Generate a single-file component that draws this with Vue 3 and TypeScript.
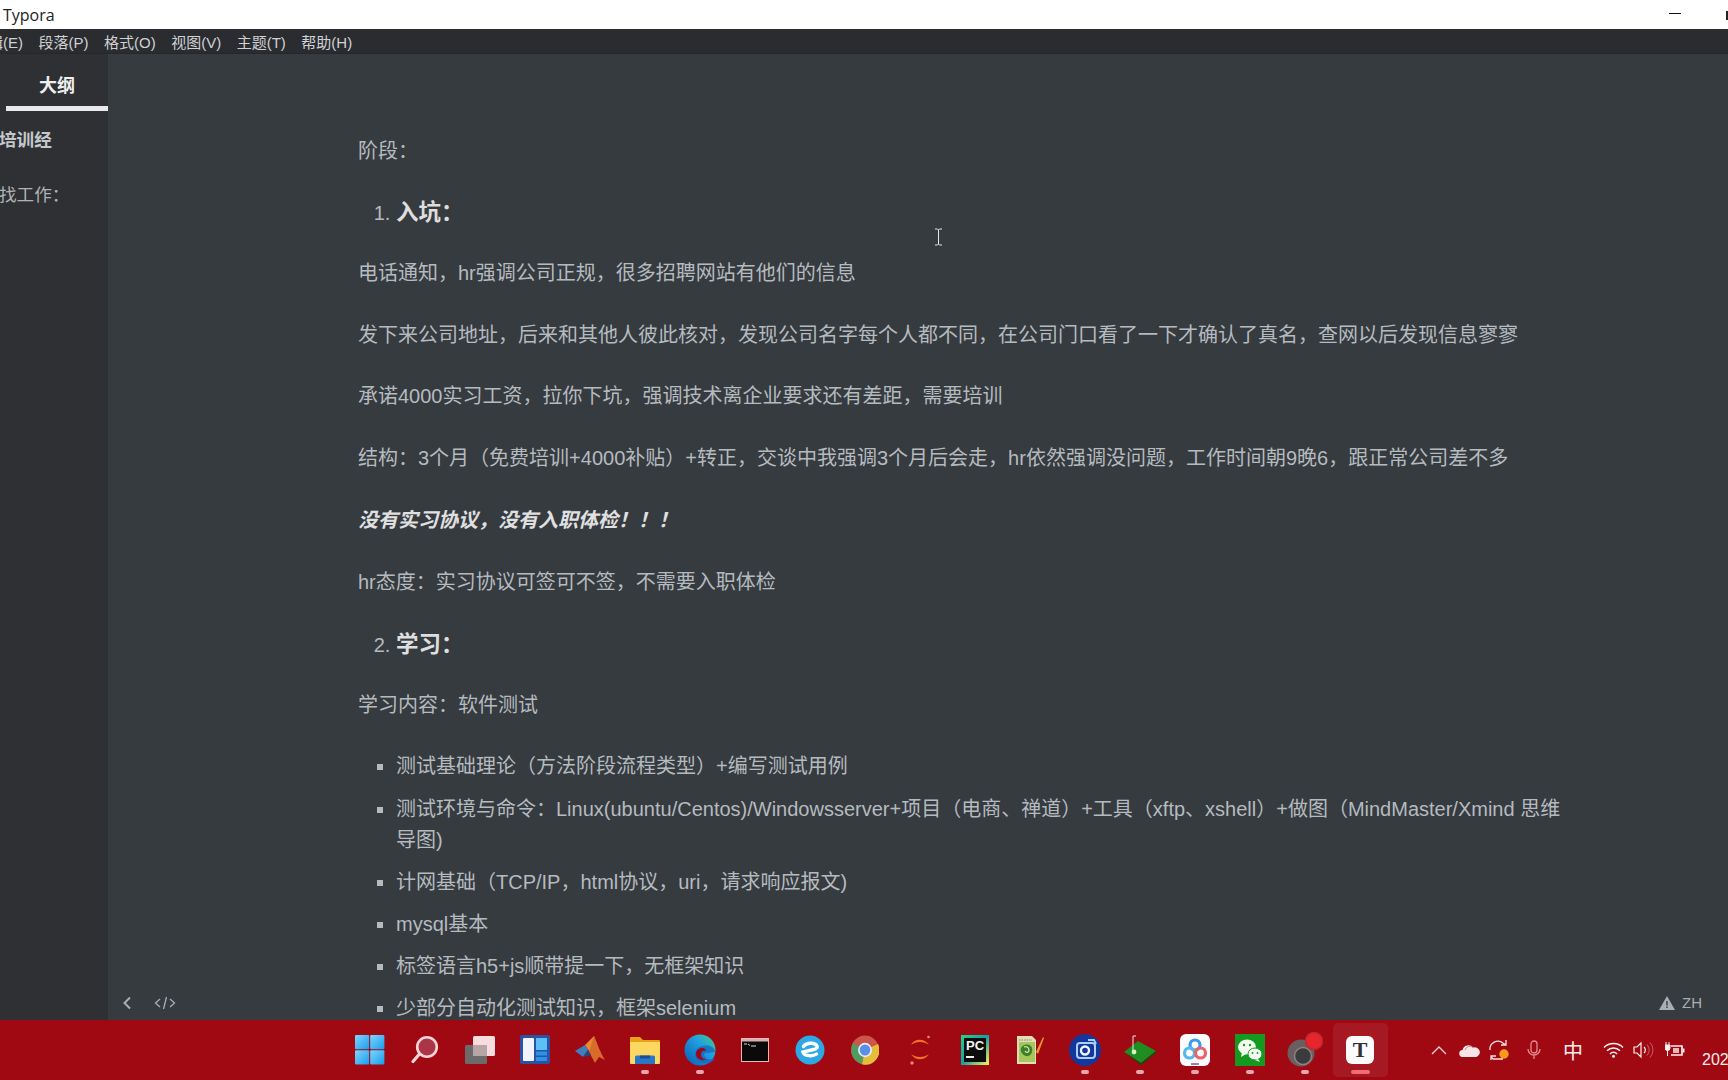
<script setup lang="ts">
const menus = ['编辑(E)', '段落(P)', '格式(O)', '视图(V)', '主题(T)', '帮助(H)']

const topics = [
  '测试基础理论（方法阶段流程类型）+编写测试用例',
  '测试环境与命令：Linux(ubuntu/Centos)/Windowsserver+项目（电商、禅道）+工具（xftp、xshell）+做图（MindMaster/Xmind 思维导图)',
  '计网基础（TCP/IP，html协议，uri，请求响应报文)',
  'mysql基本',
  '标签语言h5+js顺带提一下，无框架知识',
  '少部分自动化测试知识，框架selenium',
]
</script>

<template>
  <div class="screen">
    <header class="titlebar">
      <span class="app-name">Typora</span>
      <i class="minimize"></i>
      <i class="close-stub"></i>
    </header>

    <nav class="menubar">
      <span v-for="m in menus" :key="m">{{ m }}</span>
    </nav>

    <main class="window">
      <aside class="sidebar">
        <div class="tab"><b>大纲</b></div>
        <div class="outline-h1">培训经</div>
        <div class="outline-h2">找工作：</div>
      </aside>

      <section class="editor">
        <article class="doc">
          <p class="lead">阶段：</p>
          <ol>
            <li><h3>入坑：</h3></li>
          </ol>
          <p>电话通知，hr强调公司正规，很多招聘网站有他们的信息</p>
          <p>发下来公司地址，后来和其他人彼此核对，发现公司名字每个人都不同，在公司门口看了一下才确认了真名，查网以后发现信息寥寥</p>
          <p>承诺4000实习工资，拉你下坑，强调技术离企业要求还有差距，需要培训</p>
          <p>结构：3个月（免费培训+4000补贴）+转正，交谈中我强调3个月后会走，hr依然强调没问题，工作时间朝9晚6，跟正常公司差不多</p>
          <p class="strong">没有实习协议，没有入职体检！！！</p>
          <p>hr态度：实习协议可签可不签，不需要入职体检</p>
          <ol start="2">
            <li><h3>学习：</h3></li>
          </ol>
          <p>学习内容：软件测试</p>
          <ul>
            <li v-for="t in topics" :key="t">{{ t }}</li>
          </ul>
        </article>

        <div class="foot-left">
          <svg width="12" height="16" viewBox="0 0 12 16"><path d="M9 2.500 3.500 8 9 13.500" fill="none" stroke="#a9aeb3" stroke-width="2" /></svg>
          <svg width="22" height="16" viewBox="0 0 22 16"><path d="M6 4 1.500 8 6 12M16 4l4.500 4L16 12M12.500 2 9.500 14" fill="none" stroke="#a9aeb3" stroke-width="1.300" /></svg>
        </div>
        <div class="foot-right">
          <svg width="16" height="14" viewBox="0 0 16 14"><path d="M8 0 16 14H0Z" fill="#a9aeb3" /><path d="M7.300 5h1.400v4.500H7.300zM7.300 10.500h1.400V12H7.300z" fill="#363b40" /></svg>
          <span class="lang">ZH</span>
          <span class="count">:</span>
        </div>

        <svg class="ibeam" width="9" height="18" viewBox="0 0 9 18"><path d="M1 1h2.500L4.500 2l1-1H8M4.500 2v14M1 17h2.500l1-1 1 1H8" fill="none" stroke="#e8e8e8" stroke-width="1" /></svg>
      </section>
    </main>

    <footer class="taskbar">
      <div class="apps">
        <!-- start -->
        <div class="app">
          <svg width="30" height="30" viewBox="0 0 30 30">
            <defs>
              <linearGradient id="win" x1="0" y1="0" x2="1" y2="1"><stop offset="0" stop-color="#7fd6fa" /><stop offset="1" stop-color="#1a9cf0" /></linearGradient>
            </defs>
            <rect width="14.200" height="14.200" rx="1" fill="url(#win)" /><rect x="15.200" width="14.200" height="14.200" rx="1" fill="url(#win)" />
            <rect y="15.200" width="14.200" height="14.200" rx="1" fill="url(#win)" /><rect x="15.200" y="15.200" width="14.200" height="14.200" rx="1" fill="url(#win)" />
          </svg>
        </div>
        <!-- search -->
        <div class="app">
          <svg width="30" height="30" viewBox="0 0 30 30">
            <circle cx="17" cy="12" r="9.800" fill="#ab3445" stroke="#fbd5d8" stroke-width="2.600" />
            <path d="M9.500 19 3 26.500" stroke="#fbd5d8" stroke-width="3.200" stroke-linecap="round" />
          </svg>
        </div>
        <!-- task view -->
        <div class="app">
          <svg width="32" height="30" viewBox="0 0 32 30">
            <rect x="9" y="1" width="22" height="20" rx="1.500" fill="#f6dcdc" />
            <rect x="1" y="10" width="22" height="19" rx="1.500" fill="#6d6a6a" />
            <rect x="9" y="10" width="14" height="11" fill="#b7a5a6" />
          </svg>
        </div>
        <!-- widgets -->
        <div class="app">
          <svg width="30" height="30" viewBox="0 0 30 30">
            <rect width="30" height="29" rx="2" fill="#2c52a4" />
            <rect x="3" y="3" width="11" height="23" rx="1" fill="#f1f4fb" />
            <rect x="16" y="3" width="11" height="12" fill="#5cc0f6" />
            <rect x="16" y="16.500" width="11" height="4" fill="#2a93e8" />
            <rect x="16" y="22" width="11" height="4" fill="#2a93e8" />
          </svg>
        </div>
        <!-- matlab -->
        <div class="app">
          <svg width="32" height="30" viewBox="0 0 32 30">
            <path d="M1 16 11 10 14 15 9 22Z" fill="#3f7fc0" />
            <path d="M11 10 20 1 24 12 17 19Z" fill="#e58a35" />
            <path d="M20 1C23 8 27 19 31 25L25 22 21 28 15 17Z" fill="#d86a2a" />
            <path d="M9 22 14 15 17 20Z" fill="#1d4e83" />
          </svg>
        </div>
        <!-- explorer -->
        <div class="app">
          <svg width="32" height="28" viewBox="0 0 32 28">
            <path d="M1 2a1 1 0 0 1 1-1h9l3 3h16a1 1 0 0 1 1 1v4H1Z" fill="#e8a317" />
            <path d="M1 6h30v21a1 1 0 0 1-1 1H2a1 1 0 0 1-1-1Z" fill="#fcd860" />
            <path d="M6 28v-7a1.500 1.500 0 0 1 1.500-1.500h17A1.500 1.500 0 0 1 26 21v7Z" fill="#2a77c8" />
            <rect x="11" y="19.500" width="10" height="3" fill="#1a4f94" />
          </svg>
          <i class="dot"></i>
        </div>
        <!-- edge -->
        <div class="app">
          <svg width="32" height="32" viewBox="0 0 32 32">
            <defs>
              <linearGradient id="edge" x1="0" y1="1" x2="1" y2="0"><stop offset="0" stop-color="#0c58b0" /><stop offset=".6" stop-color="#1f9fe0" /><stop offset="1" stop-color="#45d07c" /></linearGradient>
            </defs>
            <circle cx="16" cy="16" r="15.500" fill="url(#edge)" />
            <path d="M31 18c0-4-4-6.500-9-6.500-7 0-11 4-11 9 0 5 5 9 11 9 4 0 7-2 9-5-4 1.500-9 1-10.500-2C19 20 21 18 24 19Z" fill="#1268c4" opacity=".75" />
            <path d="M12 20c0-4 3.500-6.500 7-6 2 .3 3 1.500 3 3-3-1-5 .5-5 3.500 0 3 2.500 5 6 5-6 2-11-1-11-5.500Z" fill="#a00812" />
          </svg>
          <i class="dot"></i>
        </div>
        <!-- terminal -->
        <div class="app">
          <svg width="28" height="24" viewBox="0 0 28 24">
            <rect x=".5" y=".5" width="27" height="23" fill="#0a0a0a" stroke="#e9b7b7" />
            <rect x="1" y="1" width="26" height="2.500" fill="#d9b0b0" />
            <path d="M3 6h3M7 6l2 1.500M10 8h5" stroke="#dcdcdc" stroke-width="1" fill="none" />
          </svg>
        </div>
        <!-- 2345 browser -->
        <div class="app">
          <svg width="30" height="30" viewBox="0 0 30 30">
            <circle cx="15" cy="15" r="14.500" fill="#2ea8e4" />
            <path d="M8.500 11.500C11 7.500 20 7 22 11c.8 2-1 3-3.500 3.500L8 17c1 4 9.500 5 13.500 2" fill="none" stroke="#fff" stroke-width="3.400" stroke-linecap="round" />
          </svg>
        </div>
        <!-- chrome -->
        <div class="app">
          <svg width="28" height="30" viewBox="0 0 28 30">
            <ellipse cx="14" cy="15" rx="14" ry="14.500" fill="#c9574c" />
            <path d="M14 15 2 8A14 14.500 0 0 0 11 29Z" fill="#4f9b62" />
            <path d="M14 15 27 9A14 14.500 0 0 1 11 29.300Z" fill="#e4bd3a" />
            <ellipse cx="14" cy="15" rx="7" ry="7.200" fill="#e9eef7" />
            <ellipse cx="14" cy="15" rx="5.300" ry="5.500" fill="#5a90e8" />
          </svg>
        </div>
        <!-- orange arcs -->
        <div class="app">
          <svg width="28" height="32" viewBox="0 0 28 32">
            <path d="M5 11C8 4 19 4 23 11 18 7 10 7 5 11Z" fill="#f3702a" />
            <path d="M5 20C10 24 18 24 23 20 19 27 9 27 5 20Z" fill="#f3702a" />
            <circle cx="22.500" cy="3" r="1.300" fill="#ee8b6a" />
            <circle cx="6" cy="29" r="1.700" fill="#ee8b6a" />
          </svg>
        </div>
        <!-- pycharm -->
        <div class="app">
          <svg width="28" height="30" viewBox="0 0 28 30">
            <defs>
              <linearGradient id="pc" x1="0" y1="0" x2="1" y2="1"><stop offset="0" stop-color="#21d789" /><stop offset=".5" stop-color="#0f9ea8" /><stop offset="1" stop-color="#fcf84a" /></linearGradient>
            </defs>
            <rect width="28" height="30" fill="url(#pc)" />
            <rect x="3" y="3" width="22" height="24" fill="#0c0c0c" />
            <text x="5" y="15" class="pc-text">PC</text>
            <rect x="5" y="21" width="8" height="2" fill="#eee" />
          </svg>
        </div>
        <!-- notepad -->
        <div class="app">
          <svg width="28" height="30" viewBox="0 0 28 30">
            <path d="M1 1h15l4 4v24H1Z" fill="#e2dcb8" />
            <path d="M3 7h16v20H3Z" fill="#a6c65c" />
            <path d="M5 13c3-5 10-4 11 0 1 5-2 9-6 8s-6-5-5-8Z" fill="#3e7f2e" />
            <path d="M8 12c2-1 5 0 5 3s-3 3-4 1" fill="none" stroke="#dbe9a8" stroke-width="1.200" />
            <path d="M3 5h13" stroke="#a7a27c" stroke-width="1.500" stroke-dasharray="1.500 1" />
            <path d="M20 17 27 2l1 1-6 16Z" fill="#e8953a" />
          </svg>
        </div>
        <!-- screen capture -->
        <div class="app">
          <svg width="32" height="32" viewBox="0 0 32 32">
            <circle cx="16" cy="16" r="16" fill="#14379c" />
            <path d="M8 12a3 3 0 0 1 3-3h12a3 3 0 0 1 3 3v9a3 3 0 0 1-3 3H11a3 3 0 0 1-3-3Z" fill="none" stroke="#a8d2fa" stroke-width="2" />
            <circle cx="16" cy="16.500" r="4" fill="none" stroke="#eef6ff" stroke-width="2.400" />
            <path d="M19 6h6l2 4" fill="none" stroke="#a8d2fa" stroke-width="1.800" />
          </svg>
          <i class="dot"></i>
        </div>
        <!-- green disc -->
        <div class="app">
          <svg width="32" height="30" viewBox="0 0 32 30">
            <path d="M0 17 14 6l18 10-15 12Z" fill="#1f8d1f" />
            <path d="M0 17 17 28 32 16v2L17 30Z" fill="#0d4f12" />
            <path d="M9 1v15M9 1h3" fill="none" stroke="#e7e7e7" stroke-width="1" />
            <circle cx="10" cy="17" r="2.400" fill="#d4f5c8" />
          </svg>
          <i class="dot"></i>
        </div>
        <!-- baidu netdisk -->
        <div class="app">
          <svg width="30" height="32" viewBox="0 0 30 32">
            <rect width="30" height="32" rx="6" fill="#fcfcfd" />
            <circle cx="15" cy="11" r="5" fill="none" stroke="#3c9bf0" stroke-width="3.200" />
            <circle cx="9.500" cy="19" r="5" fill="none" stroke="#54b9ee" stroke-width="3.200" />
            <circle cx="20.500" cy="19" r="5" fill="none" stroke="#e8636e" stroke-width="3.200" />
            <rect x="11" y="29" width="8" height="2" fill="#a47ab8" />
          </svg>
          <i class="dot"></i>
        </div>
        <!-- wechat -->
        <div class="app">
          <svg width="30" height="32" viewBox="0 0 30 32">
            <rect width="30" height="32" fill="#159a20" />
            <ellipse cx="12" cy="13" rx="9" ry="7.500" fill="#f4f9f2" />
            <path d="M7 18l-1 5 5-3Z" fill="#f4f9f2" />
            <ellipse cx="20" cy="20" rx="7" ry="6" fill="#f4f9f2" stroke="#159a20" />
            <path d="M23 25l2 3-5-2Z" fill="#f4f9f2" />
            <circle cx="9" cy="11" r="1.200" fill="#159a20" /><circle cx="15" cy="11" r="1.200" fill="#159a20" />
            <circle cx="17.500" cy="19" r=".9" fill="#159a20" /><circle cx="22.500" cy="19" r=".9" fill="#159a20" />
          </svg>
          <i class="dot"></i>
        </div>
        <!-- recorder -->
        <div class="app">
          <svg width="36" height="36" viewBox="0 0 36 36">
            <circle cx="14" cy="21" r="13.500" fill="#6a5f60" />
            <circle cx="16" cy="24" r="8.500" fill="#3b3b3d" stroke="#8e8283" stroke-width="1.500" />
            <circle cx="27" cy="9" r="8.500" fill="#e8242c" stroke="#b42c33" stroke-width="1.500" />
          </svg>
          <i class="dot"></i>
        </div>
        <!-- typora -->
        <div class="app app-active">
          <div class="typora-logo">T</div>
          <i class="dot dot-wide"></i>
        </div>
      </div>

      <div class="tray">
        <svg class="t-chevron" width="16" height="10" viewBox="0 0 16 10"><path d="M1 9 8 2l7 7" fill="none" stroke="#f2d6d6" stroke-width="1.300" /></svg>
        <svg class="t-cloud" width="21" height="13" viewBox="0 0 21 13"><path d="M4 13a3.500 3.500 0 0 1-.5-7A6 6 0 0 1 14 3.500 4.500 4.500 0 0 1 17.500 13Z" fill="#f6e6e6" /><path d="M6 6a5 5 0 0 1 8-2.500" stroke="#c98a90" fill="none" /></svg>
        <svg class="t-sync" width="22" height="22" viewBox="0 0 22 22">
          <path d="M2 11a8 8 0 0 1 13-7l3 2M18 1v5h-5M15 20H5l-2-3M3 21v-4h5" fill="none" stroke="#f6e3e3" stroke-width="1.300" />
          <circle cx="16" cy="15" r="4.700" fill="#f99a1c" />
        </svg>
        <svg class="t-mic" width="14" height="20" viewBox="0 0 14 20"><rect x="4" y="1" width="6" height="12" rx="3" fill="none" stroke="#e48b8f" stroke-width="1.300" /><path d="M1 9a6 6 0 0 0 12 0M7 15v4" fill="none" stroke="#e48b8f" stroke-width="1.300" /></svg>
        <span class="t-ime">中</span>
        <svg class="t-wifi" width="21" height="16" viewBox="0 0 21 16"><path d="M1 5.500a13.500 13.500 0 0 1 19 0M4 8.800a9 9 0 0 1 13 0M7 12a4.500 4.500 0 0 1 7 0" fill="none" stroke="#fbeeee" stroke-width="1.500" /><circle cx="10.500" cy="14.300" r="1.500" fill="#fbeeee" /></svg>
        <svg class="t-sound" width="21" height="18" viewBox="0 0 21 18"><path d="M1 6h3l4-4v14l-4-4H1Z" fill="none" stroke="#fbeeee" stroke-width="1.200" /><path d="M11 6a4 4 0 0 1 0 6" fill="none" stroke="#fbeeee" stroke-width="1.200" /><path d="M14 3.500a8 8 0 0 1 0 11M17 1.500a11 11 0 0 1 0 15" fill="none" stroke="#c95d63" stroke-width="1" /></svg>
        <svg class="t-power" width="20" height="17" viewBox="0 0 20 17"><path d="M6 4h11v9H6" fill="none" stroke="#fbeeee" stroke-width="1.700" /><rect x="8" y="6" width="6" height="5" fill="#e8b8ba" /><rect x="17.500" y="6.500" width="2" height="4" fill="#fbeeee" /><path d="M1 0v3M4 0v3M0 3h5v3a2.500 2.500 0 0 1-5 0ZM2.500 8v6" fill="#fbeeee" stroke="#fbeeee" /></svg>
        <span class="t-date">2023</span>
      </div>
    </footer>
  </div>
</template>

<style scoped>
.screen {
  width: 1728px;
  height: 1080px;
  display: flex;
  flex-direction: column;
  overflow: hidden;
  font-family: "Liberation Sans", "Noto Sans CJK SC", sans-serif;
}

.titlebar {
  height: 29px;
  flex: none;
  background: #fff;
  display: flex;
  align-items: center;
  padding-left: 3px;
  position: relative;
}
.app-name {
  font-family: "Open Sans", sans-serif;
  font-size: 16px;
  color: #222;
}
.minimize {
  position: absolute;
  left: 1669px;
  top: 13px;
  width: 12px;
  height: 1px;
  background: #111;
}
.close-stub {
  position: absolute;
  left: 1726px;
  top: 11px;
  width: 2px;
  height: 9px;
  background: #222;
}

.menubar {
  height: 25px;
  flex: none;
  background: #2b2c30;
  display: flex;
  align-items: center;
  gap: 15.500px;
  margin-left: -27px;
  font-size: 15px;
  color: #cfd1d3;
  border-bottom: 1px solid #26272b;
  box-sizing: border-box;
  width: calc(100% + 27px);
}

.window {
  flex: 1;
  min-height: 0;
  display: flex;
}

.sidebar {
  width: 108px;
  flex: none;
  background: #2e3033;
  overflow: hidden;
  color: #aeb3b8;
}
.tab {
  margin-left: 6px;
  height: 56.500px;
  box-sizing: border-box;
  border-bottom: 5px solid #e9e9ec;
  text-align: center;
  padding-top: 20px;
  font-size: 18px;
  line-height: 24px;
  color: #eee;
}
.outline-h1 {
  margin: 17px 0 0 -1px;
  font-size: 17.600px;
  font-weight: 700;
  line-height: 24px;
  color: #c4c8cc;
}
.outline-h2 {
  margin: 31px 0 0 -1px;
  font-size: 17.600px;
  line-height: 24px;
}

.editor {
  flex: 1;
  min-width: 0;
  background: #363b40;
  overflow: hidden;
  position: relative;
  padding: 82px 0 0 250px;
  box-sizing: border-box;
}
.doc {
  width: 1215px;
  font-size: 20px;
  line-height: 31px;
  color: #b5babf;
}
.doc p {
  margin: 0 0 30.800px;
}
.doc .lead {
  margin-bottom: 29.800px;
}
.doc .strong {
  font-weight: 700;
  font-style: italic;
  color: #e0e0e0;
}
.doc ol {
  margin: 0 0 30px;
  padding-left: 38px;
}
.doc h3 {
  margin: 0;
  font-size: 22.500px;
  font-weight: 700;
  line-height: 31px;
  color: #dedede;
}
.doc ul {
  margin: 0;
  padding-left: 38px;
  list-style-type: square;
}
.doc ul li {
  margin-bottom: 11.200px;
}

.foot-left {
  position: absolute;
  left: 13px;
  bottom: 9px;
  display: flex;
  align-items: center;
  gap: 21px;
}
.foot-right {
  position: absolute;
  left: 1551px;
  bottom: 9px;
  display: flex;
  align-items: center;
  font-size: 15px;
  color: #a9aeb3;
}
.lang {
  margin-left: 7px;
}
.count {
  margin-left: 26px;
}
.ibeam {
  position: absolute;
  left: 826px;
  top: 174px;
}

.taskbar {
  height: 60px;
  flex: none;
  background: #a00812;
  display: flex;
  padding-left: 342.500px;
  position: relative;
}
.apps {
  display: flex;
}
.app {
  width: 55px;
  height: 60px;
  display: flex;
  align-items: center;
  justify-content: center;
  position: relative;
}
.app-active {
  background: rgba(255, 255, 255, 0.07);
  border-radius: 5px;
  height: 54px;
  margin-top: 3px;
}
.dot {
  position: absolute;
  left: 50%;
  bottom: 6px;
  width: 8px;
  height: 4px;
  margin-left: -4px;
  border-radius: 2px;
  background: #e5a7ac;
}
.dot-wide {
  width: 19px;
  margin-left: -9.500px;
  bottom: 3px;
  background: #ee6d76;
}
.typora-logo {
  width: 28px;
  height: 28px;
  background: #fcfcfc;
  border-radius: 6px;
  color: #333;
  font-family: "Liberation Serif", serif;
  font-weight: 700;
  font-size: 22px;
  line-height: 28px;
  text-align: center;
}
.pc-text {
  font-family: "Liberation Sans", sans-serif;
  font-weight: 700;
  font-size: 13px;
  fill: #f5f5f5;
}

.tray {
  position: absolute;
  left: 1431px;
  top: 0;
  right: 0;
  height: 60px;
  display: flex;
  align-items: center;
  color: #fbeeee;
}
.tray > * {
  flex: none;
}
.t-cloud {
  margin-left: 12px;
}
.t-sync {
  margin-left: 8px;
}
.t-mic {
  margin-left: 17px;
}
.t-ime {
  margin-left: 22px;
  font-size: 20px;
  font-family: "Noto Sans CJK SC", sans-serif;
}
.t-wifi {
  margin-left: 20px;
}
.t-sound {
  margin-left: 9px;
}
.t-power {
  margin-left: 11px;
}
.t-date {
  margin-left: 17px;
  margin-top: 20px;
  font-size: 16px;
  white-space: nowrap;
}
</style>
